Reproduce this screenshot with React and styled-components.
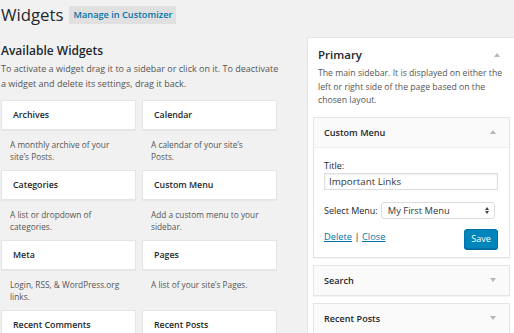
import React from 'react'
import styled, { createGlobalStyle } from 'styled-components'

const GlobalStyle = createGlobalStyle`
  html, body {
    margin: 0;
    padding: 0;
    background: #f1f1f1;
    overflow: hidden;
  }
  body {
    font-family: "Open Sans", "Liberation Sans", sans-serif;
    color: #23282d;
  }
`

const Page = styled.div`
  width: 514px;
  height: 333px;
  overflow: hidden;
  padding-left: 1px;
  box-sizing: border-box;
`

const Header = styled.div`
  display: flex;
  align-items: center;
  height: 30px;
  gap: 5px;
`

const Title = styled.h1`
  margin: 0;
  font-size: 16.8px;
  font-weight: 400;
  line-height: 24px;
  color: #23282d;
`

const HeaderButton = styled.span`
  display: inline-flex;
  align-items: center;
  height: 18px;
  padding: 0 4px 0 5px;
  background: #e0e0e0;
  color: #0073aa;
  font-size: 9.2px;
  font-weight: 600;
  margin-bottom: 1px;
`

const Columns = styled.div`
  display: flex;
  align-items: flex-start;
  gap: 29px;
`

const Left = styled.div`
  width: 277px;
  flex: none;
`

const SectionTitle = styled.h2`
  margin: 13px 0 2px;
  font-size: 12px;
  font-weight: 600;
  line-height: 16px;
`

const Intro = styled.p`
  margin: 0 -4px 9px 0;
  font-size: 9px;
  line-height: 15px;
  color: #555;
`

const Grid = styled.div`
  display: grid;
  grid-template-columns: 135px 135px;
  column-gap: 6px;
`

const Item = styled.div`
  height: 70px;
`

const Card = styled.div`
  height: 30px;
  box-sizing: border-box;
  background: #fff;
  border: 1px solid #e5e5e5;
  box-shadow: 0 1px 1px rgba(0, 0, 0, 0.04);
  padding: 0 11px;
  display: flex;
  align-items: center;
  font-size: 8.8px;
  font-weight: 600;
  color: #23282d;
`

const ItemDesc = styled.div`
  padding: 9px 10px 0 9px;
  font-size: 8.3px;
  line-height: 12px;
  color: #555;
`

const Sidebar = styled.div`
  margin-top: 7px;
  width: 210px;
  flex: none;
  background: #fff;
  border: 1px solid #e5e5e5;
  box-shadow: 0 1px 1px rgba(0, 0, 0, 0.04);
  padding: 0 6px 6px 5px;
  box-sizing: border-box;
`

const SidebarHead = styled.div`
  display: flex;
  justify-content: space-between;
  align-items: center;
  padding: 9px 10px 0 5px;
`

const SidebarName = styled.div`
  font-size: 11.5px;
  font-weight: 600;
  line-height: 16px;
`

const SidebarDesc = styled.p`
  margin: 4px 0 9px 5px;
  font-size: 8.7px;
  line-height: 13.5px;
  color: #555;
`

const Arrow = styled.span`
  width: 0;
  height: 0;
  border-left: 3px solid transparent;
  border-right: 3px solid transparent;
  ${p => (p.$up ? 'border-bottom: 4px solid #b4b9be;' : 'border-top: 4px solid #b4b9be;')}
`

const Widget = styled.div`
  border: 1px solid #e5e5e5;
  box-shadow: 0 1px 1px rgba(0, 0, 0, 0.04);
  background: #fff;
  margin-bottom: 7px;
`

const WidgetTop = styled.div`
  height: 29px;
  display: flex;
  align-items: center;
  justify-content: space-between;
  padding: 0 13px 0 10px;
  background: #fafafa;
  font-size: 9.1px;
  font-weight: 600;
  border-bottom: ${p => (p.$open ? '1px solid #eee' : '0')};
`

const WidgetBody = styled.div`
  padding: 11px 10px 8px;
  font-size: 9px;
  color: #23282d;
`

const Label = styled.div`
  line-height: 14px;
`

const TextInput = styled.div`
  height: 17px;
  box-sizing: border-box;
  border: 1px solid #ddd;
  box-shadow: inset 0 1px 2px rgba(0, 0, 0, 0.07);
  display: flex;
  align-items: center;
  padding: 0 4px;
  font-size: 9.8px;
  color: #32373c;
  width: 174px;
`

const SelectRow = styled.div`
  display: flex;
  align-items: center;
  gap: 3px;
  margin-top: 12px;
  white-space: nowrap;
`

const Select = styled.div`
  width: 114px;
  height: 17px;
  box-sizing: border-box;
  border: 1px solid #ddd;
  border-radius: 3px;
  display: flex;
  align-items: center;
  justify-content: space-between;
  padding: 0 5px 0 6px;
  font-size: 9.4px;
  color: #32373c;
`

const Updown = styled.span`
  display: flex;
  flex-direction: column;
  gap: 1px;
`

const Tri = styled.span`
  width: 0;
  height: 0;
  border-left: 2.5px solid transparent;
  border-right: 2.5px solid transparent;
  ${p => (p.$up ? 'border-bottom: 3px solid #444;' : 'border-top: 3px solid #444;')}
`

const Actions = styled.div`
  display: flex;
  align-items: center;
  justify-content: space-between;
  margin-top: 10px;
  width: 174px;
`

const Links = styled.div`
  color: #23282d;
  font-size: 9.3px;
  margin-top: -5px;
`

const Link = styled.a`
  color: #0073aa;
  text-decoration: underline;
`

const SaveButton = styled.span`
  display: inline-flex;
  align-items: center;
  justify-content: center;
  width: 34px;
  height: 20px;
  box-sizing: border-box;
  background: #0085ba;
  border: 1px solid #0073aa;
  border-radius: 3px;
  box-shadow: 0 1px 0 #006799;
  color: #fff;
  font-size: 9px;
`

const items = [
  ['Archives', 'A monthly archive of your site’s Posts.'],
  ['Calendar', 'A calendar of your site’s Posts.'],
  ['Categories', 'A list or dropdown of categories.'],
  ['Custom Menu', 'Add a custom menu to your sidebar.'],
  ['Meta', 'Login, RSS, & WordPress.org links.'],
  ['Pages', 'A list of your site’s Pages.'],
  ['Recent Comments', ''],
  ['Recent Posts', ''],
]

export default function App() {
  return (
    <Page>
      <GlobalStyle />
      <Header>
        <Title>Widgets</Title>
        <HeaderButton>Manage in Customizer</HeaderButton>
      </Header>
      <Columns>
        <Left>
          <SectionTitle>Available Widgets</SectionTitle>
          <Intro>
            To activate a widget drag it to a sidebar or click on it. To deactivate a widget and
            delete its settings, drag it back.
          </Intro>
          <Grid>
            {items.map(([name, desc]) => (
              <Item key={name}>
                <Card>{name}</Card>
                <ItemDesc>{desc}</ItemDesc>
              </Item>
            ))}
          </Grid>
        </Left>
        <Sidebar>
          <SidebarHead>
            <SidebarName>Primary</SidebarName>
            <Arrow $up />
          </SidebarHead>
          <SidebarDesc>
            The main sidebar. It is displayed on either the left or right side of the page based on
            the chosen layout.
          </SidebarDesc>
          <Widget>
            <WidgetTop $open>
              Custom Menu
              <Arrow $up />
            </WidgetTop>
            <WidgetBody>
              <Label>Title:</Label>
              <TextInput>Important Links</TextInput>
              <SelectRow>
                <span>Select Menu:</span>
                <Select>
                  My First Menu
                  <Updown>
                    <Tri $up />
                    <Tri />
                  </Updown>
                </Select>
              </SelectRow>
              <Actions>
                <Links>
                  <Link>Delete</Link> | <Link>Close</Link>
                </Links>
                <SaveButton>Save</SaveButton>
              </Actions>
            </WidgetBody>
          </Widget>
          <Widget>
            <WidgetTop>
              Search
              <Arrow />
            </WidgetTop>
          </Widget>
          <Widget>
            <WidgetTop>
              Recent Posts
              <Arrow />
            </WidgetTop>
          </Widget>
        </Sidebar>
      </Columns>
    </Page>
  )
}
